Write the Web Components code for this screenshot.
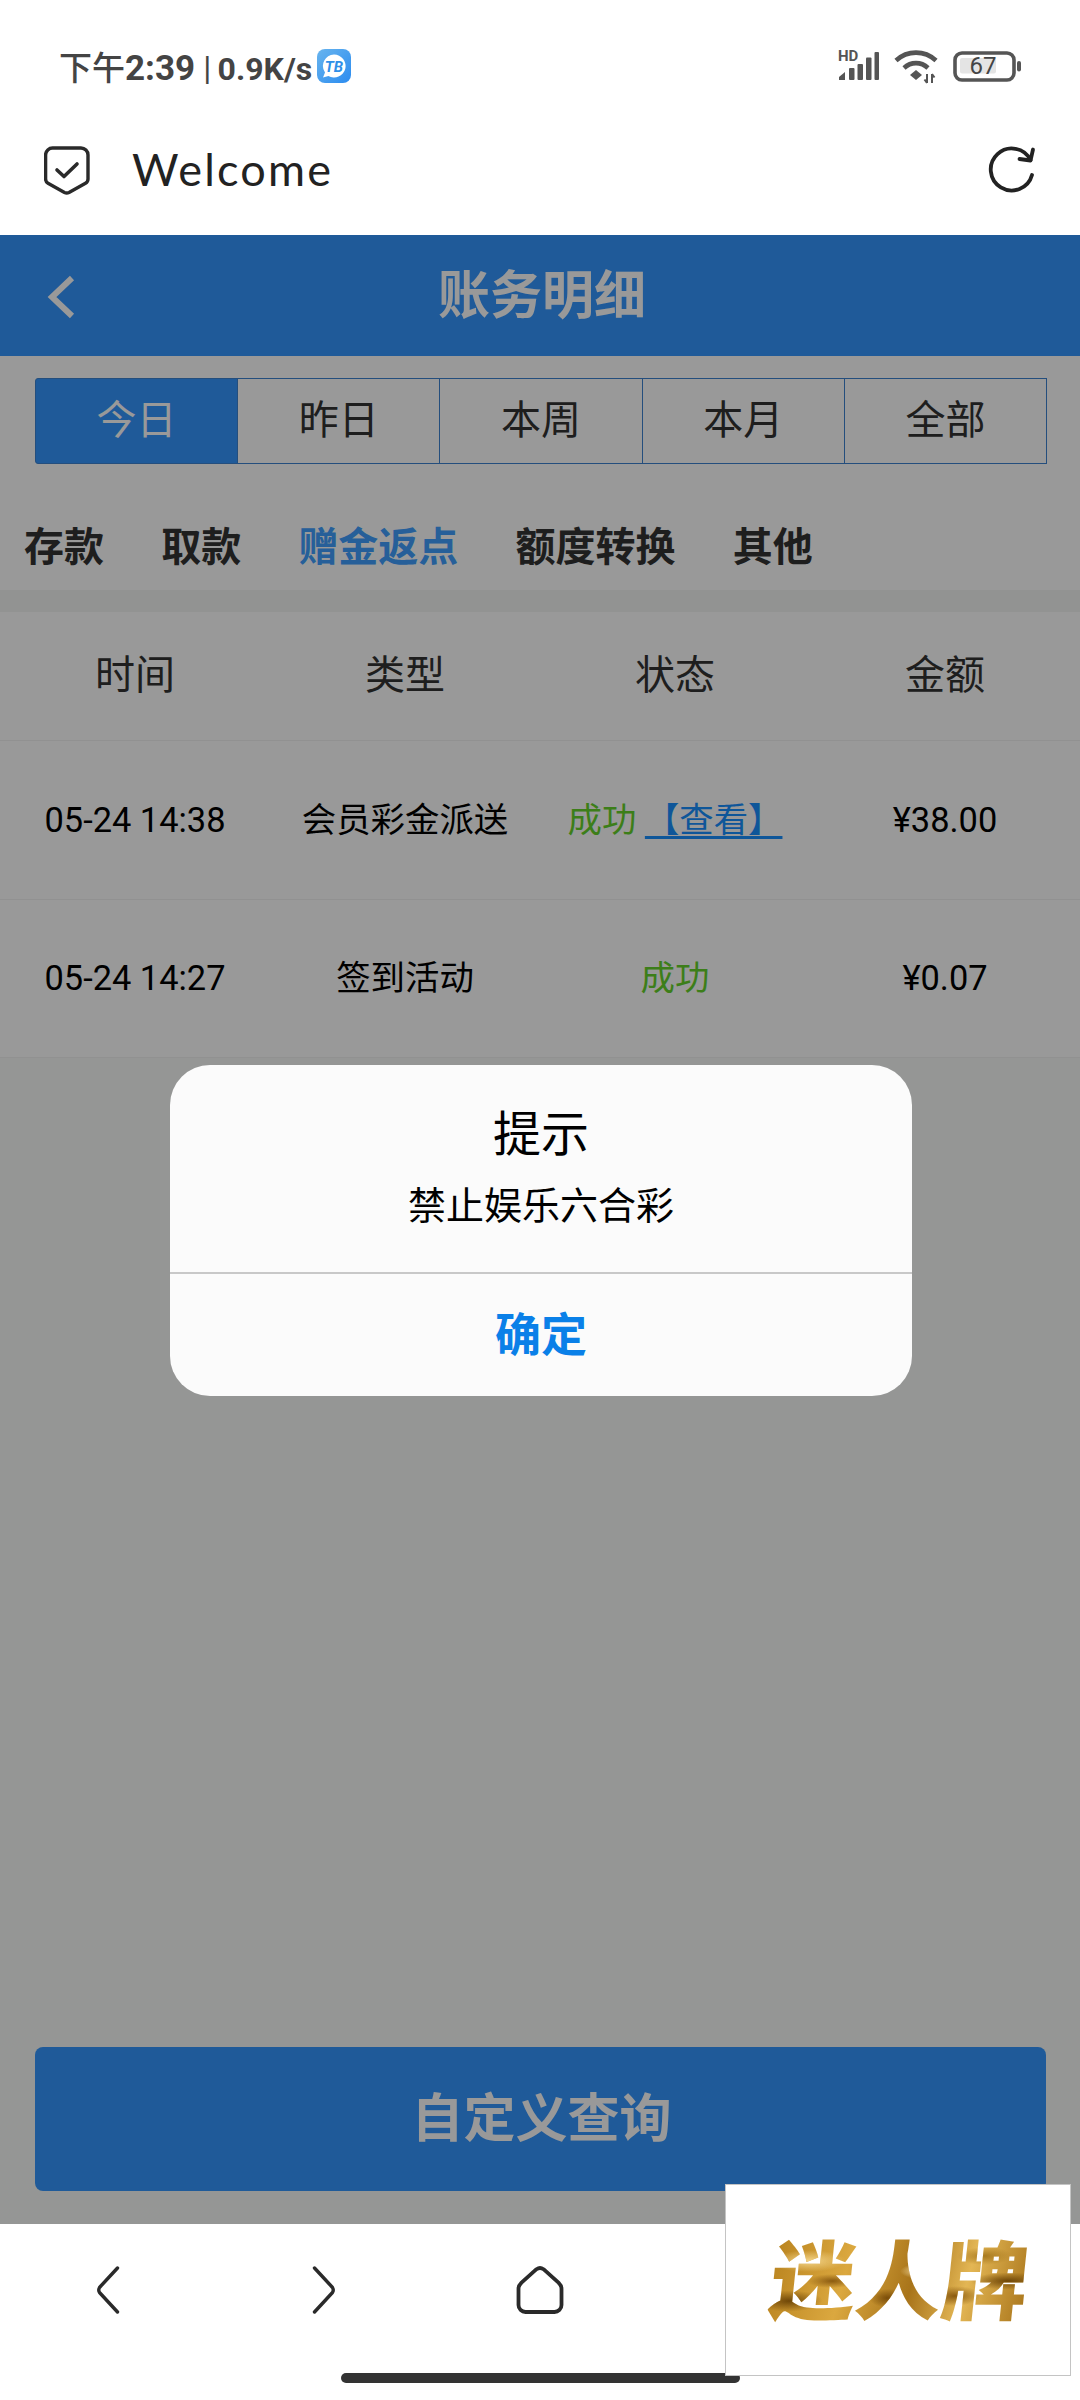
<!DOCTYPE html>
<html lang="zh-CN">
<head>
<meta charset="utf-8">
<title>账务明细</title>
<style>
  html, body { margin: 0; background: #fff; }
  body {
    position: relative;
    width: 1080px;
    height: 2400px;
    overflow: hidden;
    display: flex;
    flex-direction: column;
    font-family: Roboto, "Noto Sans CJK SC", sans-serif;
  }
</style>
</head>
<body>
  <status-bar></status-bar>
  <browser-bar>Welcome</browser-bar>
  <dim-page>
    <page-header>账务明细</page-header>
    <period-tabs>
      <period-tab active>今日</period-tab>
      <period-tab>昨日</period-tab>
      <period-tab>本周</period-tab>
      <period-tab>本月</period-tab>
      <period-tab>全部</period-tab>
    </period-tabs>
    <type-tabs>
      <type-tab>存款</type-tab>
      <type-tab>取款</type-tab>
      <type-tab active>赠金返点</type-tab>
      <type-tab>额度转换</type-tab>
      <type-tab>其他</type-tab>
    </type-tabs>
    <record-table>
      <record-row head>
        <span>时间</span><span>类型</span><span>状态</span><span>金额</span>
      </record-row>
      <record-row>
        <span>05-24 14:38</span><span>会员彩金派送</span>
        <span><status-ok>成功</status-ok> <detail-link>【查看】</detail-link></span>
        <span>¥38.00</span>
      </record-row>
      <record-row>
        <span>05-24 14:27</span><span>签到活动</span>
        <span><status-ok>成功</status-ok></span>
        <span>¥0.07</span>
      </record-row>
    </record-table>
    <query-button>自定义查询</query-button>
    <alert-dialog slot="dialog" title-text="提示" action="确定">禁止娱乐六合彩</alert-dialog>
  </dim-page>
  <nav-bar></nav-bar>
  <brand-mark>迷人牌</brand-mark>

<script>
function define(name, html, init) {
  const template = document.createElement("template");
  template.innerHTML = html;
  customElements.define(name, class extends HTMLElement {
    constructor() {
      super();
      this.attachShadow({ mode: "open" }).append(template.content.cloneNode(true));
      if (init) init(this);
    }
  });
}

define("status-bar", `
  <style>
    :host {
      display: flex;
      align-items: center;
      box-sizing: border-box;
      height: 104px;
      padding: 28px 0 0 59px;
      color: #444;
    }
    .time { font: 500 33px Roboto, "Noto Sans CJK SC", sans-serif; white-space: nowrap; }
    .time b { font-weight: 700; font-size: 35px; }
    .time b + i + b { font-size: 32px; }
    .time i { font-style: normal; font-weight: 400; margin-right: -2px; }
    .app { margin-left: 5px; display: block; }
    .right { margin-left: auto; margin-right: 53px; display: block; }
  </style>
  <span class="time">下午<b>2:39</b> <i>|</i> <b>0.9K/s</b></span>
  <svg class="app" width="34" height="34" viewBox="0 0 34 34">
    <defs>
      <linearGradient id="g" x1="0" y1="0" x2="1" y2="1">
        <stop offset="0" stop-color="#68b4ee"/><stop offset="1" stop-color="#2b8cf0"/>
      </linearGradient>
    </defs>
    <rect width="34" height="34" rx="8" fill="url(#g)"/>
    <path d="M17 5.500a11.500 11.500 0 1 1-5.600 21.500L6 28.500l2-5A11.500 11.500 0 0 1 17 5.500z" fill="#fff"/>
    <text x="17" y="22.500" text-anchor="middle" font-family="Roboto" font-weight="700" font-style="italic" font-size="15" fill="#2f8fe8">TB</text>
  </svg>
  <svg class="right" width="190" height="40" viewBox="838 46 190 40">
    <text x="839" y="60.500" font-family="Roboto" font-weight="700" font-size="15" fill="#555">HD</text>
    <g fill="#555">
      <path d="M840 80v-3l6-5v8z"/>
      <rect x="850" y="68" width="5.500" height="12" rx="1"/>
      <rect x="858.500" y="64" width="5.500" height="16" rx="1"/>
      <rect x="867" y="57.500" width="5.500" height="22.500" rx="1"/>
      <rect x="875.500" y="52" width="4.500" height="28" rx="1"/>
    </g>
    <g fill="none" stroke="#555" stroke-width="4.600">
      <path d="M897 60.500c11.500-10.500 28.500-10.500 40 0"/>
      <path d="M905 68c7-6.500 17-6.500 24 0"/>
    </g>
    <path d="M917 70l6 5-6 5-6-5z" fill="#555"/>
    <path d="M928 74v9M925.500 79.500l2.500 3.500M933 83v-9M933 74l2.500 3.500" stroke="#555" stroke-width="2" fill="none"/>
    <rect x="956" y="53" width="59" height="27" rx="7" fill="none" stroke="#555" stroke-width="3.600"/>
    <rect x="961" y="58" width="36" height="15.500" rx="2" fill="#e4e4e4"/>
    <text x="984" y="74" text-anchor="middle" font-family="Roboto" font-size="24" fill="#444">67</text>
    <rect x="1018" y="61" width="4" height="10.500" rx="2" fill="#555"/>
  </svg>
`);

define("browser-bar", `
  <style>
    :host {
      display: flex;
      align-items: center;
      box-sizing: border-box;
      height: 131px;
      padding: 0 44px;
      color: #222;
      font: 400 45px Lato, sans-serif;
      letter-spacing: 2.200px;
    }
    svg { display: block; flex: none; }
    .title { margin-left: 42px; flex: 1; padding-bottom: 2px; }
  </style>
  <svg width="46" height="50" viewBox="0 0 46 50" fill="none" stroke="#2a2a2a" stroke-width="3.400" stroke-linejoin="round" stroke-linecap="round" style="margin-top:2px">
    <path d="M9 2h28a7 7 0 0 1 7 7v24a5 5 0 0 1-2.500 4.300L25 46.500a5 5 0 0 1-4.500 0L4 37.300A5 5 0 0 1 1.600 33V9A7 7 0 0 1 9 2z"/>
    <path d="M13 24l7 6.500L33 18" stroke-width="3.600"/>
  </svg>
  <span class="title"><slot></slot></span>
  <svg width="48" height="48" viewBox="0 0 48 48" fill="none" stroke="#222" stroke-width="3.800" stroke-linecap="round" stroke-linejoin="round">
    <path d="M44 29A21 21 0 1 1 42.500 14"/>
    <path d="M45 3.500l-2.500 11-11-1.500"/>
  </svg>
`);

define("dim-page", `
  <style>
    :host {
      position: relative;
      display: flex;
      flex-direction: column;
      flex: 1;
      background: #f8faf8;
    }
    .shade {
      position: absolute;
      inset: 0;
      display: flex;
      align-items: center;
      justify-content: center;
      background: rgba(0, 0, 0, 0.4);
    }
  </style>
  <slot></slot>
  <div class="shade"><slot name="dialog"></slot></div>
`);

define("page-header", `
  <style>
    :host {
      position: relative;
      display: flex;
      align-items: center;
      justify-content: center;
      box-sizing: border-box;
      height: 121px;
      padding: 0 0 8px 4px;
      background: #3496ff;
      color: #fff;
      font: 700 52px "Noto Sans CJK SC", sans-serif;
    }
    svg { position: absolute; left: 47px; top: 40px; }
  </style>
  <svg width="28" height="44" viewBox="0 0 28 44" fill="none" stroke="#fff" stroke-width="6">
    <path d="M25 3L5 22l20 19"/>
  </svg>
  <slot></slot>
`);

define("period-tabs", `
  <style>
    :host {
      display: grid;
      grid-template-columns: repeat(5, 1fr);
      height: 86px;
      padding: 22px 34px 0 35px;
      background: #fff;
    }
  </style>
  <slot></slot>
`);

define("period-tab", `
  <style>
    :host {
      display: flex;
      align-items: center;
      justify-content: center;
      box-sizing: border-box;
      padding-bottom: 8px;
      border: 1px solid #3c82d0;
      margin-right: -1px;
      color: #333;
      font: 400 40px "Noto Sans CJK SC", sans-serif;
    }
    :host([active]) { background: #3496ff; color: #fff; border-radius: 3px 0 0 3px; }
  </style>
  <slot></slot>
`);

define("type-tabs", `
  <style>
    :host {
      display: flex;
      align-items: flex-end;
      gap: 57.200px;
      box-sizing: border-box;
      height: 126px;
      padding: 0 0 22px 24px;
      background: #fff;
    }
  </style>
  <slot></slot>
`);

define("type-tab", `
  <style>
    :host {
      display: block;
      color: #333;
      font: 700 40px/48px "Noto Sans CJK SC", sans-serif;
    }
    :host([active]) { color: #409fff; }
  </style>
  <slot></slot>
`);

define("record-table", `
  <style>
    :host { display: block; border-top: 22px solid #f3f5f4; background: #fff; }
  </style>
  <slot></slot>
`);

define("record-row", `
  <style>
    :host {
      display: grid;
      grid-template-columns: repeat(4, 1fr);
      align-content: center;
      align-items: baseline;
      justify-items: center;
      box-sizing: border-box;
      height: 158.500px;
      padding-bottom: 6px;
      border-bottom: 1px solid #f2f2f2;
      color: #000;
      font: 400 34.400px Roboto, "Noto Sans CJK SC", sans-serif;
    }
    :host([head]) { height: 129px; padding-bottom: 8px; color: #333; font-size: 40px; }
    ::slotted(span) { white-space: nowrap; }
  </style>
  <slot></slot>
`);

define("status-ok", `
  <style>
    :host { color: #65d22b; }
  </style>
  <slot></slot>
`);

define("detail-link", `
  <style>
    :host {
      color: #1890ff;
      text-decoration: underline;
      text-decoration-thickness: 3px;
      text-underline-offset: 4px;
    }
  </style>
  <slot></slot>
`);

define("query-button", `
  <style>
    :host {
      display: flex;
      align-items: center;
      justify-content: center;
      box-sizing: border-box;
      height: 144px;
      margin: auto 34px 33px 35px;
      padding: 0 0 10px 2px;
      border-radius: 8px;
      background: #3496ff;
      color: #fff;
      font: 700 52px "Noto Sans CJK SC", sans-serif;
    }
  </style>
  <slot></slot>
`);

define("alert-dialog", `
  <style>
    :host {
      display: block;
      width: 742px;
      height: 331px;
      margin: 2px 0 0 2px;
      border-radius: 40px;
      background: #fbfbfb;
      color: #000;
      text-align: center;
      font-family: "Noto Sans CJK SC", sans-serif;
      overflow: hidden;
    }
    .body { box-sizing: border-box; height: 209px; padding-top: 30px; border-bottom: 2px solid #c8c8c8; }
    h2 { margin: 0; font: 400 48px/70px "Noto Sans CJK SC", sans-serif; }
    p { margin: 11px 0 0; font: 400 38px/54px "Noto Sans CJK SC", sans-serif; }
    .action { display: flex; align-items: center; justify-content: center; height: 122px; padding-bottom: 8px; box-sizing: border-box; color: #0a80e8; font: 700 46px "Noto Sans CJK SC", sans-serif; }
  </style>
  <div class="body">
    <h2 id="t"></h2>
    <p><slot></slot></p>
  </div>
  <div class="action" id="a"></div>
`, (el) => {
  el.shadowRoot.getElementById("t").textContent = el.getAttribute("title-text");
  el.shadowRoot.getElementById("a").textContent = el.getAttribute("action");
});

define("nav-bar", `
  <style>
    :host {
      display: flex;
      flex-direction: column;
      align-items: center;
      box-sizing: border-box;
      height: 176px;
      padding-top: 42px;
      background: #fff;
    }
    .icons { display: grid; grid-template-columns: repeat(5, 216px); justify-items: center; }
    svg { display: block; }
    .pill { width: 399px; height: 10px; margin-top: 59px; border-radius: 5px; background: #333; }
  </style>
  <div class="icons">
    <svg width="24" height="48" viewBox="0 0 24 48" fill="none" stroke="#2a2a2a" stroke-width="3.400" stroke-linecap="round" stroke-linejoin="round">
      <path d="M21.500 2L3.500 21.500q-1.500 2.500 0 5L21.500 46"/>
    </svg>
    <svg width="24" height="48" viewBox="0 0 24 48" fill="none" stroke="#2a2a2a" stroke-width="3.400" stroke-linecap="round" stroke-linejoin="round">
      <path d="M2.500 2L20.500 21.500q1.500 2.500 0 5L2.500 46"/>
    </svg>
    <svg width="48" height="48" viewBox="0 0 48 48" fill="none" stroke="#2a2a2a" stroke-width="3.800" stroke-linejoin="round">
      <path d="M20.500 3.200q3.500-2.400 7 0l15 13.500q3 3 3 6v16.300a7 7 0 0 1-7 7H9.500a7 7 0 0 1-7-7V22.700q0-3 3-6z"/>
    </svg>
    <span></span><span></span>
  </div>
  <div class="pill"></div>
`);

define("brand-mark", `
  <style>
    :host {
      position: absolute;
      left: 725px;
      top: 2184px;
      display: flex;
      align-items: center;
      justify-content: center;
      box-sizing: border-box;
      width: 346px;
      height: 192px;
      border: 1px solid #c4c4c4;
      background: #fff;
    }
    span {
      display: block;
      transform: skewX(-6deg);
      margin: 0 0 8px 4px;
      font: 900 86px/100px "Noto Sans CJK SC", sans-serif;
      color: transparent;
      background:
        radial-gradient(ellipse at 8% 75%, #6f4708 0, transparent 10%),
        radial-gradient(ellipse at 14% 35%, #f3d488 0, transparent 12%),
        radial-gradient(ellipse at 24% 55%, #8a5a10 0, transparent 9%),
        radial-gradient(ellipse at 38% 30%, #f7e0a0 0, transparent 10%),
        radial-gradient(ellipse at 46% 72%, #7a4d0a 0, transparent 9%),
        radial-gradient(ellipse at 58% 45%, #fbe9b4 0, transparent 10%),
        radial-gradient(ellipse at 72% 70%, #8a5a10 0, transparent 10%),
        radial-gradient(ellipse at 82% 30%, #a87a20 0, transparent 9%),
        radial-gradient(ellipse at 92% 55%, #6f4708 0, transparent 11%),
        linear-gradient(100deg, #b8821e, #dba83f 30%, #a8741a 55%, #e3b654 75%, #a8741a);
      -webkit-background-clip: text;
      background-clip: text;
    }
  </style>
  <span><slot></slot></span>
`);
</script>
</body>
</html>
